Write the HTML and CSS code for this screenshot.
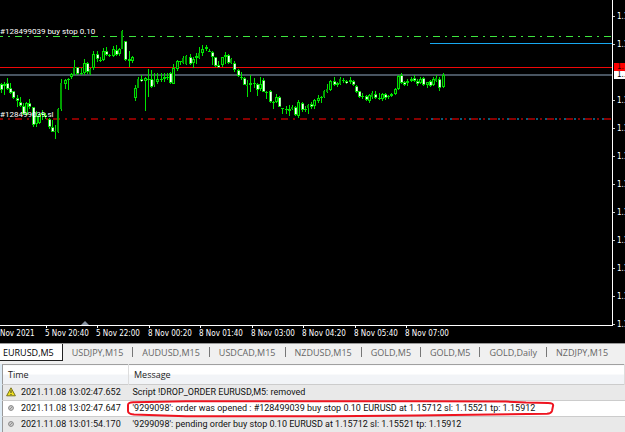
FILE: index.html
```html
<!DOCTYPE html>
<html lang="en">
<head>
<meta charset="utf-8">
<title>EURUSD,M5</title>
<link rel="stylesheet" href="styles.css">
</head>
<body>
<main class="terminal">
  <section class="chart" aria-label="EURUSD,M5 chart">
    <div class="plot">
      <svg class="drawing" id="drawing" width="612" height="325" viewBox="0 0 612 325" aria-hidden="true">
        <path d="M0 75H612" stroke="#485460" stroke-width="2"/>
        <path d="M0 67.5H612" stroke="#f00808"/>
        <path d="M-4 36.5H612" stroke="#3ee63e" stroke-dasharray="7 5 2 5"/>
        <path d="M-4 119H612" stroke="#880000" stroke-width="2" stroke-dasharray="7 5 2 5"/>
        <path d="M430 43.5H612" stroke="#18a8f0"/>
        <path d="M431 119H612" stroke="#086080" stroke-width="2" stroke-dasharray="2 8 2 7"/>
        <g id="candles"></g>
      </svg>
      <span class="order order-open">#128499039 buy stop 0.10</span>
      <span class="order order-sl">#128499039 sl</span>
      <svg class="shift" width="8" height="4" viewBox="0 0 8 4" aria-hidden="true"><path d="M4 0L8 4H0Z" fill="#8490a0"/></svg>
    </div>
    <div class="prices">
      <span>1.1</span><span>1.1</span><span></span><span>1.1</span><span>1.1</span><span>1.1</span>
      <span>1.1</span><span>1.1</span><span>1.1</span><span>1.1</span><span>1.1</span><span>1.1</span>
      <b class="quote ask">1.1</b>
      <b class="quote bid">1.1</b>
    </div>
    <div class="times">
      <span>Nov 2021</span><span>5 Nov 20:40</span><span>5 Nov 22:00</span><span>8 Nov 00:20</span><span>8 Nov 01:40</span><span>8 Nov 03:00</span><span>8 Nov 04:20</span><span>8 Nov 05:40</span><span>8 Nov 07:00</span>
    </div>
  </section>
  <nav class="tabs" aria-label="Charts">
    <button class="tab active">EURUSD,M5</button>
    <button class="tab">USDJPY,M15</button>
    <button class="tab">AUDUSD,M15</button>
    <button class="tab">USDCAD,M15</button>
    <button class="tab">NZDUSD,M15</button>
    <button class="tab">GOLD,M5</button>
    <button class="tab">GOLD,M5</button>
    <button class="tab">GOLD,Daily</button>
    <button class="tab last">NZDJPY,M15</button>
  </nav>
  <section class="log">
    <table>
      <thead>
        <tr><th class="time">Time</th><th>Message</th></tr>
      </thead>
      <tbody>
        <tr>
          <td><svg class="icon" width="10" height="10" viewBox="0 0 10 10" aria-hidden="true"><path d="M5 .8L9.4 8.8H.6Z" fill="#f0e020" stroke="#77731c" stroke-linejoin="round"/><path d="M5 3.2V6M5 7V8" stroke="#333"/></svg>2021.11.08 13:02:47.652</td>
          <td>Script !DROP_ORDER EURUSD,M5: removed</td>
        </tr>
        <tr class="plain">
          <td><svg class="icon" width="10" height="10" viewBox="0 0 10 10" aria-hidden="true"><circle cx="5" cy="5" r="2.4" fill="#d0d0d0" stroke="#858585"/><path d="M3.5 6.5L6.5 3.5" stroke="#909090"/></svg>2021.11.08 13:02:47.647</td>
          <td class="marked">'9299098': order was opened : #128499039 buy stop 0.10 EURUSD at 1.15712 sl: 1.15521 tp: 1.15912
            <svg class="marker" width="430" height="18" viewBox="0 0 430 18" aria-hidden="true"><path d="M8 2.2Q2 2 2 5V11Q2 14 8 14.6L60 16.2H205L290 15.6L421 13.8Q425 13.6 426 11L427 6Q428 3 422 3L400 2.6L380 1.6L300 1.2L60 1.2Z" fill="none" stroke="#ee1420" stroke-width="2"/></svg>
          </td>
        </tr>
        <tr>
          <td><svg class="icon" width="10" height="10" viewBox="0 0 10 10" aria-hidden="true"><circle cx="5" cy="5" r="2.4" fill="#d0d0d0" stroke="#858585"/><path d="M3.5 6.5L6.5 3.5" stroke="#909090"/></svg>2021.11.08 13:01:54.170</td>
          <td>'9299098': pending order buy stop 0.10 EURUSD at 1.15712 sl: 1.15521 tp: 1.15912</td>
        </tr>
      </tbody>
    </table>
  </section>
</main>
<script src="chart.js"></script>
</body>
</html>
```
FILE: chart.js
```js
// Bars as "high top bottom low kind", in thirds of a pixel below y = 20.
// Kinds: f = white falling body, h = hollow rising body, d = dim body.
const bars = `188 193 210 220 f,185 193 197 224 h,175 190 207 210 f,190 205 220 222 f,212 214 235 236 f,226 233 243 262 f,230 245 257 260 f,250 258 282 285 f,246 250 284 285 h,237 248 262 268 f,260 262 315 320 f,272 288 313 320 h,280 283 308 312 h,270 280 285 300 f,278 284 292 298 f,294 297 320 326 f,300 320 335 337 f,315 333 335 356 d,264 267 337 338 d,178 190 268 272 d,178 180 191 208 h,175 177 179 210 h,160 163 172 178 h,120 140 163 166 d,140 142 162 165 f,143 160 162 165 h,118 128 160 165 h,125 130 157 163 f,145 147 162 165 d,92 102 145 150 h,92 102 117 125 f,112 119 121 125 h,85 92 120 124 h,82 92 105 108 f,103 105 107 112 h,78 88 108 112 h,75 90 105 107 f,84 88 103 108 h,30 32 87 88 d,62 64 120 124 f,92 118 122 140 h,107 110 124 128 h,194 205 235 243 h,172 178 203 205 d,165 178 184 186 f,172 175 182 272 h,147 177 180 231 h,150 178 202 204 f,158 180 195 200 d,160 178 187 192 h,160 176 180 185 h,160 170 178 186 h,160 170 173 180 h,155 158 188 192 f,133 145 191 192 h,120 123 148 152 h,122 124 126 135 h,108 113 128 132 d,105 108 132 135 d,103 110 132 134 f,110 117 128 143 h,98 107 115 132 h,80 100 115 118 d,75 88 100 107 h,75 82 87 92 h,88 93 95 97 h,93 97 112 135 f,110 112 138 142 f,122 135 140 143 f,110 112 135 140 h,97 104 112 131 h,102 104 130 132 f,115 118 128 132 d,122 128 150 155 f,147 149 168 171 f,156 170 175 180 h,170 173 194 195 f,180 195 197 231 d,165 188 195 216 h,173 189 191 205 h,188 191 209 228 f,172 191 207 213 h,175 180 215 217 f,213 215 217 237 h,210 213 245 250 f,243 245 247 267 h,221 230 247 250 h,228 230 260 262 f,263 265 267 282 h,258 267 270 282 h,255 267 272 288 h,256 261 266 270 d,258 262 286 287 f,240 246 287 294 h,246 248 270 275 f,257 266 270 275 h,251 254 265 282 d,247 252 262 267 f,236 241 258 267 h,225 233 243 250 h,228 231 233 250 h,210 213 232 234 d,192 208 215 220 d,180 184 211 213 h,172 182 195 198 f,187 190 195 202 h,172 178 192 195 d,174 180 182 190 h,180 182 190 193 f,172 181 185 192 h,180 182 196 198 f,195 198 215 218 f,212 214 230 233 f,220 229 232 237 h,226 229 241 243 f,222 226 242 248 h,213 220 232 237 d,213 221 235 237 f,220 235 238 240 h,219 222 238 243 h,220 223 234 240 f,224 227 232 237 h,220 223 228 230 h,204 206 222 224 h,165 169 208 210 h,158 165 188 192 f,183 187 195 198 f,176 184 190 197 h,172 178 182 186 h,165 175 184 186 f,178 182 192 198 f,172 178 190 193 h,170 174 196 198 f,185 187 195 204 h,180 184 197 201 f,172 177 195 198 h,165 174 182 186 d,172 178 203 212 f,158 165 200 203 h`;

const y = v => Math.round(20 + v / 3);
const rect = (x, top, w, bottom, fill) =>
  `<rect x="${x}" y="${top}" width="${w}" height="${Math.max(1, bottom - top)}" fill="${fill}"/>`;

document.getElementById("candles").innerHTML = bars.split(",").map((bar, i) => {
  const [high, top, bottom, low, kind] = bar.split(" ");
  const x = Math.floor(1 + i * 3.2035);
  const t = y(+top), b = y(+bottom);
  let out = rect(x, y(+high), 1, y(+low), "#00e400");
  if (kind === "f") {
    out += rect(x - 1, t, 3, b, "#00d800") + rect(x, t + 1, 1, b - 1, "#fff") + rect(x + 1, t + 1, 1, b - 1, "#a0f4a0");
  } else if (kind === "h") {
    out += rect(x - 1, t, 3, b, "#00e000");
    if (b - t > 2) out += rect(x, t + 1, 1, b - 1, "#002800");
  } else {
    out += rect(x - 1, t, 2, b, "#00a000");
  }
  return out;
}).join("");
```
FILE: styles.css
```css
* { box-sizing: border-box; }

body {
  margin: 0;
  background: #f0f0f0;
  color: #111;
  font-family: "Open Sans", "Noto Sans", sans-serif;
  font-size: 9px;
}

.terminal {
  display: flex;
  flex-direction: column;
  min-height: 100vh;
  overflow: hidden;
}

.chart {
  display: grid;
  grid-template-columns: 1fr 12px;
  grid-template-rows: auto 17px;
  background: #000;
  color: #fff;
  font-family: "DejaVu Sans Condensed", "DejaVu Sans", sans-serif;
  font-size: 8px;
}

.plot {
  position: relative;
  min-width: 0;
  overflow: hidden;
  border-right: 1px solid #fff;
  border-bottom: 1px solid #fff;
}

.drawing { display: block; }

.order {
  position: absolute;
  left: 0;
  font-family: Roboto, sans-serif;
  line-height: 10px;
}

.order-open { top: 27px; }
.order-sl { top: 110px; }

.shift {
  position: absolute;
  left: 81px;
  bottom: 0;
}

.prices {
  position: relative;
  display: flex;
  flex-direction: column;
  padding-top: 2px;
  height: 326px;
}

.prices span {
  display: flex;
  align-items: center;
  gap: 2px;
  flex: 0 0 28px;
  overflow: hidden;
}

.prices span:not(:empty)::before {
  content: "";
  flex: 0 0 2px;
  height: 1px;
  background: #ccc;
}

.quote {
  position: absolute;
  left: 1px;
  right: 0;
  height: 8px;
  padding-left: 3px;
  overflow: hidden;
  font-weight: normal;
  line-height: 8px;
}

.ask { top: 63px; background: #f00; color: #300; }
.bid { top: 71px; background: #fff; color: #000; }

.times {
  grid-column: 1 / -1;
  display: grid;
  grid-template-columns: 45px repeat(4, 51px 52px);
  white-space: nowrap;
  line-height: 16px;
}

.times span { position: relative; }

.times span + span::before {
  content: "";
  position: absolute;
  top: 0;
  left: 1px;
  width: 1px;
  height: 2px;
  background: #fff;
}

.tabs {
  display: flex;
  height: 21px;
  border-top: 1px solid #999;
}

.tab {
  position: relative;
  flex: none;
  height: 17px;
  margin: 0;
  padding: 0 10px 0 9px;
  border: 0;
  background: none;
  color: #666;
  font: inherit;
  line-height: 17px;
  white-space: nowrap;
}

.tab:not(.active, .last)::after {
  content: "";
  position: absolute;
  top: 3px;
  right: 0;
  width: 1px;
  height: 10px;
  background: #777;
}

.tab.active {
  padding: 0 8px 0 3px;
  border-right: 1px solid #222;
  border-bottom: 1px solid #222;
  background: #fff;
  color: #000;
}

.log {
  flex: 1;
  padding-left: 2px;
  background: #dceaf4;
}

table {
  width: 100%;
  border-collapse: collapse;
  border-left: 1px solid #999;
  table-layout: fixed;
  border-top: 1px solid #a0a0a0;
  background: #fff;
}

th, td {
  height: 16px;
  padding: 0 0 0 4px;
  text-align: left;
  line-height: 15px;
  white-space: nowrap;
}

td { font-family: Roboto, sans-serif; }

th {
  height: 20px;
  padding-left: 5px;
  border-right: 1px solid #ddd;
  background: linear-gradient(#fff 50%, #f2f4f7 50%);
  color: #222;
  font-weight: normal;
}

.time { width: 126px; }

tbody tr { background: #e9e9e9; border-top: 1px solid #ccc; }
tbody .plain { background: #fff; }

.icon {
  margin: 0 5px 0 -1px;
  vertical-align: -2px;
}

.marked { position: relative; overflow: visible; }

.marker {
  position: absolute;
  top: -1px;
  left: -3px;
}
```
